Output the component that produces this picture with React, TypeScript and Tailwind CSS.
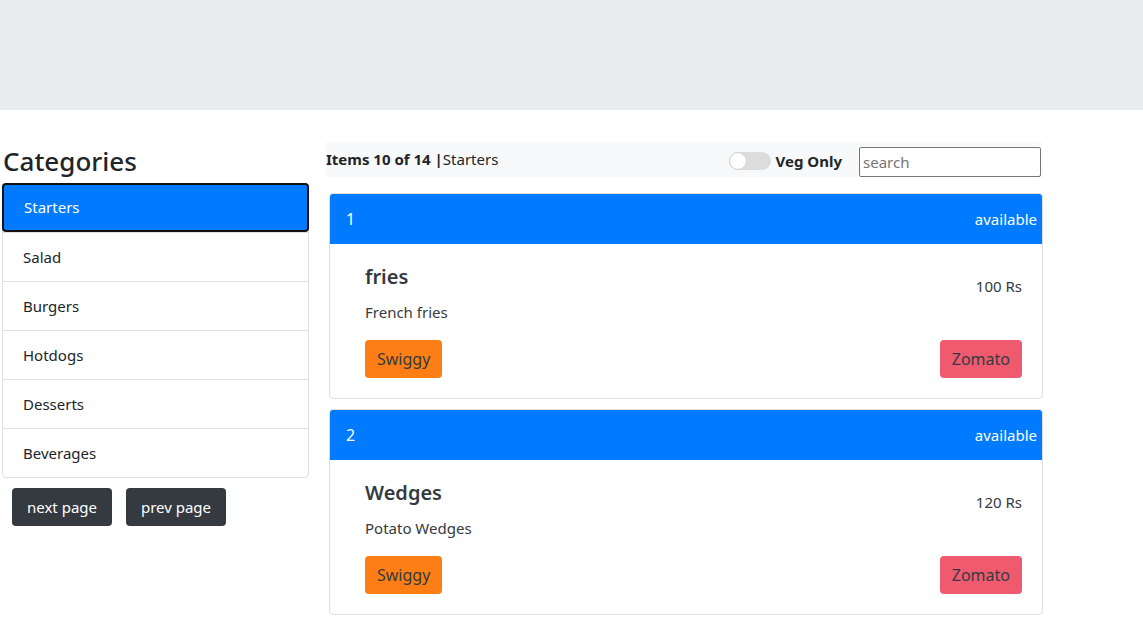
const categories = ['Starters', 'Salad', 'Burgers', 'Hotdogs', 'Desserts', 'Beverages'];

const items = [
  { id: 1, name: 'fries', desc: 'French fries', price: '100 Rs' },
  { id: 2, name: 'Wedges', desc: 'Potato Wedges', price: '120 Rs' },
];

function ItemCard({ item }: { item: (typeof items)[number] }) {
  return (
    <div className="w-[714px] border border-[#dfdfdf] rounded-[4px] overflow-hidden bg-white">
      <div className="h-[50px] bg-[#007bff] text-white text-[15px] flex items-center justify-between pl-[16px] pr-[5px]">
        <span className="text-[16px]">{item.id}</span>
        <span>available</span>
      </div>
      <div className="pl-[35px] pr-[20px] pt-[20px] pb-[20px] text-[#343a40]">
        <div className="flex justify-between h-[34px]">
          <div className="text-[20px] font-semibold leading-[24px] mt-[1px]">{item.name}</div>
          <div className="mt-[11px] text-[15px] leading-[22px]">{item.price}</div>
        </div>
        <div className="mt-[2px] text-[15px] leading-[24px]">{item.desc}</div>
        <div className="mt-[16px] flex justify-between">
          <button className="h-[38px] px-[12px] rounded-[4px] bg-[#fd7e14] text-[#343a40] text-[16px]">Swiggy</button>
          <button className="h-[38px] px-[12px] rounded-[4px] bg-[#ef5a6f] text-[#343a40] text-[16px]">Zomato</button>
        </div>
      </div>
    </div>
  );
}

export default function App() {
  return (
    <div className="min-h-screen bg-white text-[#212529] font-['Noto_Sans','Open_Sans',sans-serif] text-[15px]">
      <div className="h-[110px] bg-[#e9ecef]" />
      <div className="flex">
        {/* left column */}
        <div className="w-[326px] pl-[2px] pt-[35px]">
          <h3 className="text-[26px] font-medium leading-[32px] pl-[1px] mb-[6px]">Categories</h3>
          <div className="w-[307px] border border-[#dfdfdf] rounded-[4px]">
            {categories.map((c, i) =>
              i === 0 ? (
                <div
                  key={c}
                  className="h-[49px] -m-[1px] mb-0 flex items-center pl-[20px] bg-[#007bff] text-white border-2 border-[#111] rounded-[4px]"
                >
                  {c}
                </div>
              ) : (
                <div key={c} className="h-[49px] flex items-center pl-[20px] border-t border-[#dfdfdf] first:border-t-0">
                  {c}
                </div>
              )
            )}
          </div>
          <div className="flex gap-[14px] mt-[10px] pl-[10px]">
            <button className="h-[38px] w-[100px] rounded-[4px] bg-[#343a40] text-white text-[15px]">next page</button>
            <button className="h-[38px] w-[100px] rounded-[4px] bg-[#343a40] text-white text-[15px]">prev page</button>
          </div>
        </div>

        {/* right column */}
        <div className="pt-[32px]">
          <div className="w-[716px] h-[35px] bg-[#f8f9fa] flex items-center">
            <span className="font-bold">Items 10 of 14 |</span>
            <span>Starters</span>
            <div className="ml-auto flex items-center mt-[3px]">
              <div className="w-[42px] h-[18px] rounded-full bg-[#dcdcdc] relative">
                <div className="absolute left-0 top-0 w-[18px] h-[18px] rounded-full bg-white border border-[#cfcfcf]" />
              </div>
              <span className="ml-[5px] font-bold">Veg Only</span>
            </div>
            <input
              placeholder="search"
              className="ml-[17px] mr-[1px] w-[182px] h-[30px] mt-[5px] border border-[#767676] rounded-[2px] px-[3px] text-[15px] placeholder:text-[#757575] bg-white"
            />
          </div>
          <div className="flex flex-col gap-[10px] mt-[16px] ml-[3px]">
            {items.map((it) => (
              <ItemCard key={it.id} item={it} />
            ))}
          </div>
        </div>
      </div>
    </div>
  );
}
